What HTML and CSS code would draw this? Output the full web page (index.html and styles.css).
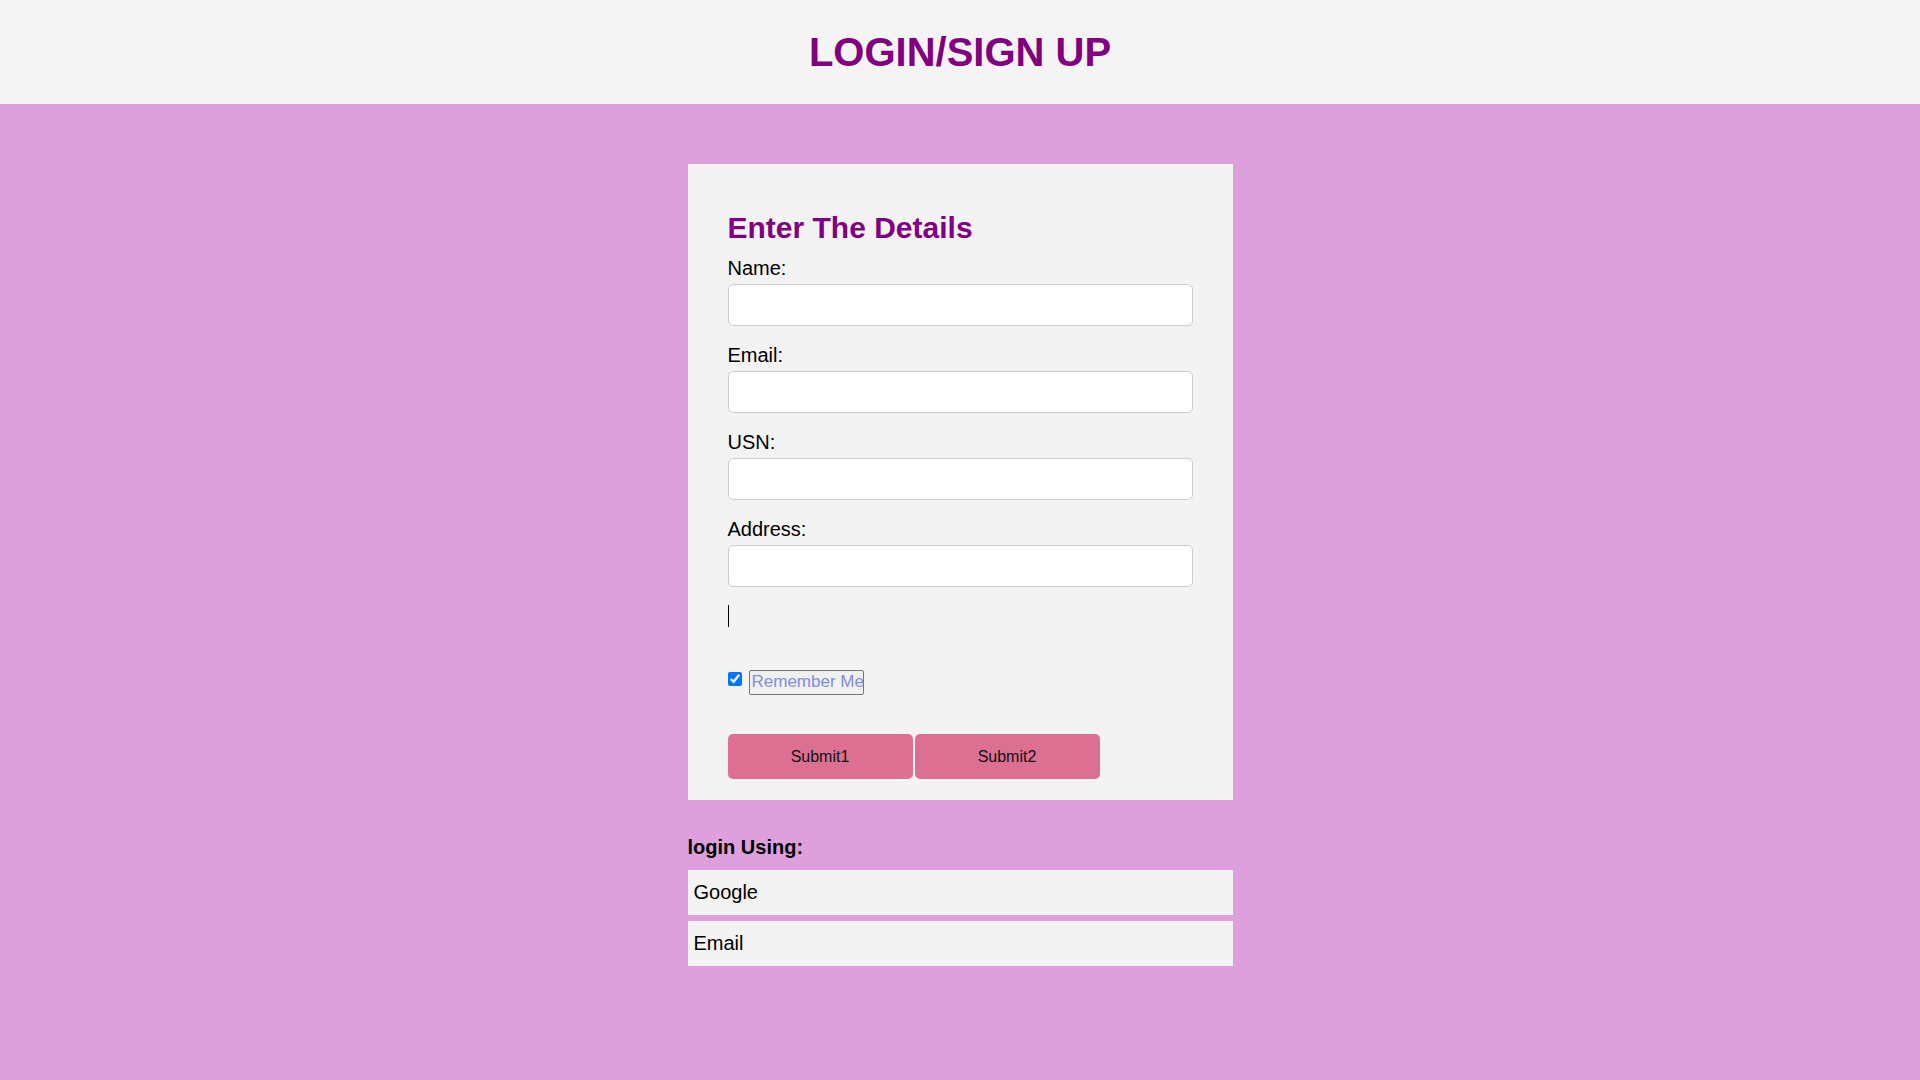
FILE: index.html
```html
<!DOCTYPE html>
<html lang="en">
<head>
<meta charset="utf-8">
<title>Login / Sign Up</title>
<link rel="stylesheet" href="styles.css">
</head>
<body>
<header class="site-header">
  <h1 class="site-title">LOGIN/SIGN UP</h1>
</header>
<main class="page">
  <form class="card">
    <h2 class="card-title">Enter The Details</h2>
    <label class="field-label" for="name">Name:</label>
    <input class="field-input" id="name" type="text">
    <label class="field-label" for="email">Email:</label>
    <input class="field-input" id="email" type="text">
    <label class="field-label" for="usn">USN:</label>
    <input class="field-input" id="usn" type="text">
    <label class="field-label" for="address">Address:</label>
    <input class="field-input" id="address" type="text">
    <div class="caret-line"><span class="caret"></span></div>
    <div class="remember-row">
      <input class="remember-check" type="checkbox" checked>
      <span class="remember-box">Remember Me</span>
    </div>
    <div class="button-row">
      <button class="submit-btn" type="button">Submit1</button>
      <button class="submit-btn" type="button">Submit2</button>
    </div>
  </form>
  <section class="login-using">
    <div class="login-title">login Using:</div>
    <div class="login-option">Google</div>
    <div class="login-option">Email</div>
  </section>
</main>
</body>
</html>
```
FILE: styles.css
```css
html, body {
  margin: 0;
  padding: 0;
}
body {
  background: #dda0dd;
  font-family: "Liberation Sans", Arial, sans-serif;
  color: #000;
  min-height: 1080px;
}
.site-header {
  background: #f4f4f4;
  padding: 29px 0;
  text-align: center;
}
.site-title {
  margin: 0;
  font-size: 40px;
  line-height: 46px;
  font-weight: bold;
  color: #800080;
}
.page {
  display: flex;
  flex-direction: column;
  align-items: center;
  padding-top: 60px;
}
.card {
  box-sizing: border-box;
  width: 545px;
  background: #f3f3f3;
  padding: 47px 40px 21px;
  display: flex;
  flex-direction: column;
}
.card-title {
  margin: 0 0 12px;
  font-size: 30px;
  line-height: 34px;
  font-weight: bold;
  color: #800080;
}
.field-label {
  display: block;
  font-size: 20px;
  line-height: 23px;
  margin-bottom: 4px;
}
.field-input {
  box-sizing: border-box;
  width: 100%;
  height: 42px;
  margin: 0 0 18px;
  border: 1px solid #cccccc;
  border-radius: 5px;
  background: #ffffff;
  font-family: inherit;
  font-size: 16px;
  padding: 0 8px;
}
.caret-line {
  height: 23px;
}
.caret {
  display: block;
  width: 1px;
  height: 22px;
  background: #000;
}
.remember-row {
  display: flex;
  align-items: flex-start;
  margin-top: 42px;
}
.remember-check {
  width: 14px;
  height: 14px;
  margin: 2px 7px 0 0;
}
.remember-box {
  box-sizing: border-box;
  width: 115px;
  height: 25px;
  border: 1px solid #767676;
  border-radius: 2px;
  background: #f0f0f0;
  color: #808ee0;
  font-size: 17px;
  line-height: 21px;
  padding-left: 2px;
  white-space: nowrap;
  overflow: hidden;
}
.button-row {
  display: flex;
  gap: 2px;
  margin-top: 39px;
}
.submit-btn {
  width: 185px;
  height: 45px;
  border: none;
  border-radius: 5px;
  background: #db7093;
  color: #111;
  font-family: inherit;
  font-size: 16px;
  padding: 0;
}
.login-using {
  width: 545px;
  margin-top: 36px;
}
.login-title {
  font-size: 20px;
  line-height: 23px;
  font-weight: bold;
  margin-bottom: 11px;
}
.login-option {
  background: #f3f3f3;
  font-size: 20px;
  line-height: 23px;
  padding: 11px 6px;
  margin-bottom: 6px;
}
```
